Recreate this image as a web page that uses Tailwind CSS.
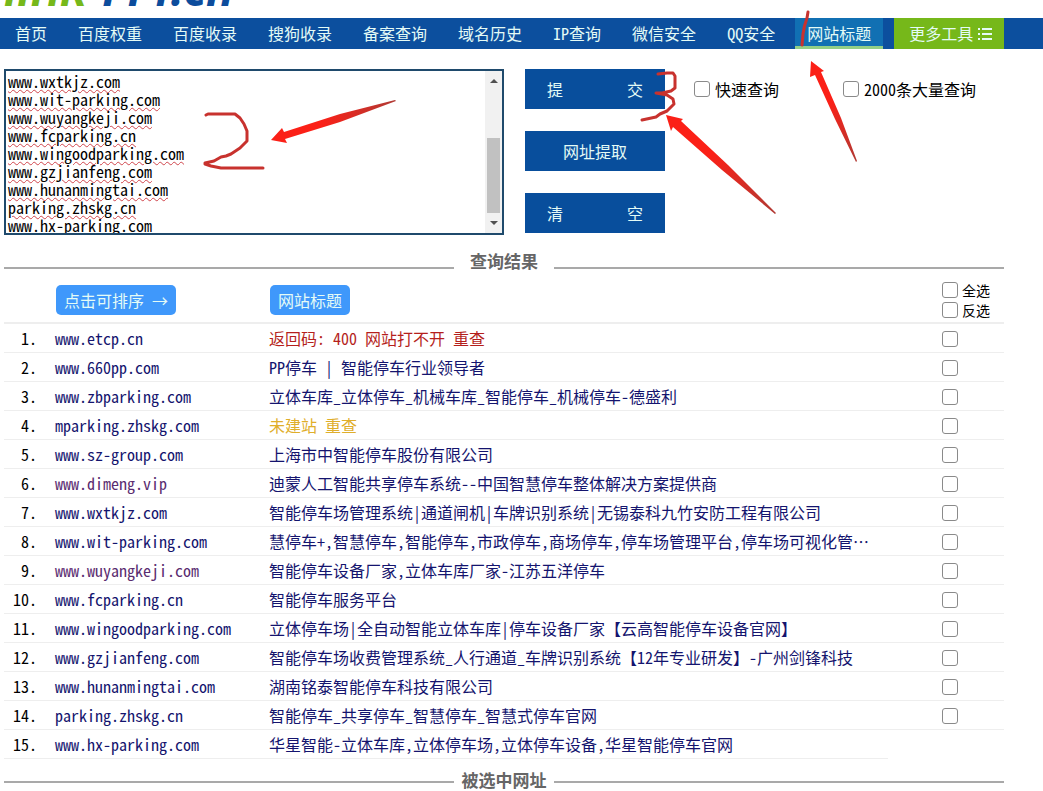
<!DOCTYPE html>
<html lang="zh-CN">
<head>
  <meta charset="UTF-8" />
  <meta name="viewport" content="width=device-width, initial-scale=1.0"/>
  <title>网站标题批量查询</title>
  <script src="https://cdn.jsdelivr.net/npm/@tailwindcss/browser@4"></script>
</head>
<body class="relative overflow-x-hidden bg-white text-base text-black font-['Noto_Sans_Mono_CJK_SC','Noto_Sans_CJK_SC',monospace]">

  <!-- Logo -->
  <header class="flex h-[18px] items-end overflow-hidden pb-3 pl-1">
    <a href="#" class="flex items-baseline gap-2 font-['Liberation_Sans',sans-serif] text-[48px] leading-[32px] font-bold italic">
      <span class="text-[#76b81a]">link</span><span class="font-['Open_Sans',sans-serif] text-[46px] text-[#0c4c9c]">114.cn</span>
    </a>
  </header>

  <!-- 导航 -->
  <nav class="flex h-[31px] items-stretch gap-px bg-[#0c4f9e] leading-[31px] whitespace-nowrap text-[#e4fbf6]">
    <a href="#" class="px-[15px]">首页</a>
    <a href="#" class="px-[15px]">百度权重</a>
    <a href="#" class="px-[15px]">百度收录</a>
    <a href="#" class="px-[15px]">搜狗收录</a>
    <a href="#" class="px-[15px]">备案查询</a>
    <a href="#" class="px-[15px]">域名历史</a>
    <a href="#" class="px-[15px]">IP查询</a>
    <a href="#" class="px-[15px]">微信安全</a>
    <a href="#" class="px-[15px]">QQ安全</a>
    <a href="#" class="ml-1 border-b-3 border-[#93cf86] bg-[#1170b3] px-3">网站标题</a>
    <a href="#" class="ml-2.5 flex items-center gap-1 bg-[#76b81a] pr-[11px] pl-[15px]">更多工具
      <svg class="h-4 w-4" viewBox="0 0 16 16" fill="currentColor" aria-hidden="true">
        <path d="M1 2h2v2H1zM5 2h10v2H5zM1 7h2v2H1zM5 7h10v2H5zM1 12h2v2H1zM5 12h10v2H5z"/>
      </svg>
    </a>
  </nav>

  <main class="ml-1 max-w-[1000px]">

    <!-- 查询表单 -->
    <form class="flex items-start pt-5">
      <div class="relative w-1/2">
        <textarea id="urls" aria-label="网址列表" spellcheck="false" class="block h-[166px] w-full resize-none overflow-hidden border-2 border-[#1f4a6c] px-0.5 pt-px leading-[18px] underline decoration-[#d0454c] decoration-wavy decoration-1 underline-offset-1 outline-none">www.wxtkjz.com
www.wit-parking.com
www.wuyangkeji.com
www.fcparking.cn
www.wingoodparking.com
www.gzjianfeng.com
www.hunanmingtai.com
parking.zhskg.cn
www.hx-parking.com</textarea>
        <!-- 滚动条 -->
        <div class="absolute inset-y-0.5 right-0.5 flex w-[17px] flex-col items-center justify-between bg-[#f1f1f1] py-1.5">
          <svg class="h-2 w-2" viewBox="0 0 8 8" fill="#505050" aria-hidden="true"><path d="M0 6l4-4 4 4z"/></svg>
          <div class="mt-auto mb-1.5 h-[75px] w-[13px] bg-[#c1c1c1]"></div>
          <svg class="h-2 w-2" viewBox="0 0 8 8" fill="#505050" aria-hidden="true"><path d="M0 2l4 4 4-4z"/></svg>
        </div>
      </div>
      <div class="ml-[21px] flex w-[140px] flex-col gap-[22px] text-[#e4fbf6]">
        <button type="button" class="h-10 bg-[#084e9c]">提&#12288;&#12288;&#12288;&#12288;交</button>
        <button type="button" class="h-10 bg-[#084e9c]">网址提取</button>
        <button type="button" class="h-10 bg-[#084e9c]">清&#12288;&#12288;&#12288;&#12288;空</button>
      </div>
      <div class="ml-[29px] flex h-10 items-center gap-16">
        <label class="flex items-center gap-[5px]"><input type="checkbox" class="h-4 w-4 appearance-none rounded-[3px] border border-[#8a8a8a] bg-white">快速查询</label>
        <label class="flex items-center gap-[5px]"><input type="checkbox" class="h-4 w-4 appearance-none rounded-[3px] border border-[#8a8a8a] bg-white">2000条大量查询</label>
      </div>
    </form>

    <!-- 查询结果 -->
    <div class="mt-[19px] flex items-end">
      <div class="h-0.5 flex-1 bg-[#a9a9a9]"></div>
      <h2 class="w-[100px] pb-px text-center text-[17px] leading-[14px] font-bold text-[#666]">查询结果</h2>
      <div class="h-0.5 flex-1 bg-[#a9a9a9]"></div>
    </div>

    <table class="w-full table-fixed border-collapse leading-7 whitespace-nowrap">
      <colgroup>
        <col class="w-[51px]"><col class="w-[214px]"><col><col class="w-[116px]">
      </colgroup>
      <thead>
        <tr class="h-[54px] border-b-2 border-[#eee] text-left">
          <th></th>
          <th class="pt-2 font-normal"><button type="button" class="ml-px block h-[30px] rounded-[5px] bg-[#3f98fb] px-2 text-[#e4fbf6]">点击可排序 →</button></th>
          <th class="pt-2 font-normal"><button type="button" class="ml-px block h-[30px] rounded-[5px] bg-[#3f98fb] px-2 text-[#e4fbf6]">网站标题</button></th>
          <th class="pt-2 pl-[54px] text-sm leading-5 font-normal">
            <label class="flex h-5 items-center gap-1"><input type="checkbox" class="h-4 w-4 appearance-none rounded-[3px] border border-[#8a8a8a] bg-white">全选</label>
            <label class="flex h-5 items-center gap-1"><input type="checkbox" class="h-4 w-4 appearance-none rounded-[3px] border border-[#8a8a8a] bg-white">反选</label>
          </th>
        </tr>
      </thead>
      <tbody id="results"></tbody>
    </table>

    <!-- 被选中网址 -->
    <div class="mt-[11px] flex items-center">
      <div class="h-0.5 flex-1 bg-[#a9a9a9]"></div>
      <h2 class="w-[100px] pb-1 text-center text-[17px] leading-[20px] font-bold text-[#666]">被选中网址</h2>
      <div class="h-0.5 flex-1 bg-[#a9a9a9]"></div>
    </div>
  </main>

  <!-- 操作步骤标注 -->
  <svg class="pointer-events-none absolute top-0 left-0" width="900" height="240" viewBox="0 0 900 240" fill="none" aria-hidden="true">
    <defs>
      <linearGradient id="g1" gradientUnits="userSpaceOnUse" x1="271" y1="140" x2="396" y2="100"><stop offset=".4" stop-color="#fb2017"/><stop offset="1" stop-color="#b03a34"/></linearGradient>
      <linearGradient id="g2" gradientUnits="userSpaceOnUse" x1="666" y1="115" x2="776" y2="214"><stop offset=".4" stop-color="#fb2017"/><stop offset="1" stop-color="#b03a34"/></linearGradient>
      <linearGradient id="g3" gradientUnits="userSpaceOnUse" x1="811" y1="61" x2="857" y2="162"><stop offset=".4" stop-color="#fb2017"/><stop offset="1" stop-color="#b03a34"/></linearGradient>
    </defs>
    <g stroke="#c8322e" stroke-width="3" stroke-linecap="round" stroke-linejoin="round">
      <path d="M808 12L807 18Q804 26 803 34L802 45"/>
      <path d="M206 115L208 114H235L240 118L244 124L247 131V141L240 148L231 154L226 156L221 157L214 161L205 163L205 164L211 166L221 168H263"/>
      <path d="M658 74L667 73L673 73L675 76V88L671 91L662 93H656L667 95L673 99L674 104L667 111L660 114L656 117L642 120"/>
    </g>
    <path fill="url(#g1)" d="M271 140L282 128L284 132L340 114L395 100L396 101L340 122L285 139L287 143Z"/>
    <path fill="url(#g2)" d="M666 115L683 119L681 121L728 165L776 213L775 214L722 170L673 127L671 131Z"/>
    <path fill="url(#g3)" d="M811 61L824 71L821 72L841 118L857 161L856 162L835 119L815 75L810 77Z"/>
  </svg>

  <script>
    const rows = [
      { url: 'www.etcp.cn', title: '返回码: 400 网站打不开 重查', state: 'error' },
      { url: 'www.660pp.com', title: 'PP停车 | 智能停车行业领导者' },
      { url: 'www.zbparking.com', title: '立体车库_立体停车_机械车库_智能停车_机械停车-德盛利' },
      { url: 'mparking.zhskg.com', title: '未建站 重查', state: 'empty' },
      { url: 'www.sz-group.com', title: '上海市中智能停车股份有限公司' },
      { url: 'www.dimeng.vip', title: '迪蒙人工智能共享停车系统--中国智慧停车整体解决方案提供商', visited: true },
      { url: 'www.wxtkjz.com', title: '智能停车场管理系统|通道闸机|车牌识别系统|无锡泰科九竹安防工程有限公司' },
      { url: 'www.wit-parking.com', title: '慧停车+,智慧停车,智能停车,市政停车,商场停车,停车场管理平台,停车场可视化管…' },
      { url: 'www.wuyangkeji.com', title: '智能停车设备厂家,立体车库厂家-江苏五洋停车', visited: true },
      { url: 'www.fcparking.cn', title: '智能停车服务平台' },
      { url: 'www.wingoodparking.com', title: '立体停车场|全自动智能立体车库|停车设备厂家【云高智能停车设备官网】' },
      { url: 'www.gzjianfeng.com', title: '智能停车场收费管理系统_人行通道_车牌识别系统【12年专业研发】-广州剑锋科技' },
      { url: 'www.hunanmingtai.com', title: '湖南铭泰智能停车科技有限公司' },
      { url: 'parking.zhskg.cn', title: '智能停车_共享停车_智慧停车_智慧式停车官网' },
      { url: 'www.hx-parking.com', title: '华星智能-立体车库,立体停车场,立体停车设备,华星智能停车官网', noCheck: true }
    ];

    const titleColor = { error: 'text-[#b51f1c]', empty: 'text-[#dfae2b]' };

    document.getElementById('results').innerHTML = rows.map((r, i) => `
      <tr class="h-[29px]">
        <td class="border-b border-[#eee] pr-[18px] text-right">${i + 1}.</td>
        <td class="border-b border-[#eee]"><a href="#" class="${r.visited ? 'text-[#5a2c70]' : 'text-[#14146e]'}">${r.url}</a></td>
        <td class="border-b border-[#eee]"><a href="#" class="${titleColor[r.state] || 'text-[#14146e]'}">${r.title}</a></td>
        ${r.noCheck ? '<td></td>' : `<td class="border-b border-[#eee] pt-0.5 pl-[54px]"><input type="checkbox" aria-label="${r.url}" class="block h-4 w-4 appearance-none rounded-[3px] border border-[#8a8a8a] bg-white"></td>`}
      </tr>`).join('');
  </script>

</body>
</html>
